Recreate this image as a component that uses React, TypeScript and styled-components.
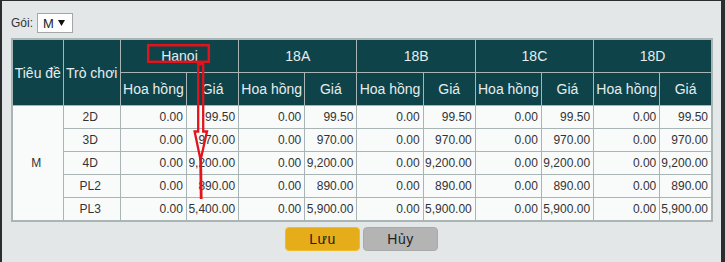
import React from "react";
import styled, { createGlobalStyle } from "styled-components";

const GlobalStyle = createGlobalStyle`
  html, body {
    margin: 0;
    padding: 0;
    background: #2b2d2e;
    font-family: "Liberation Sans", Arial, sans-serif;
  }
`;

const Screen = styled.div`
  position: relative;
  width: 725px;
  height: 262px;
  padding: 1px 4px 0 2px;
  box-sizing: border-box;
  overflow: hidden;
`;

const Panel = styled.div`
  background: #e4e7e8;
  height: 261px;
  padding: 12px 0 0 9px;
  box-sizing: border-box;
`;

const PackRow = styled.div`
  display: flex;
  align-items: center;
  gap: 4px;
  height: 20px;
  font-size: 12px;
  color: #333;
`;

const FakeSelect = styled.div`
  display: flex;
  align-items: center;
  justify-content: space-between;
  width: 36px;
  height: 20px;
  box-sizing: border-box;
  padding: 0 7px 0 5px;
  background: #fff;
  border: 1px solid #a6a6a6;
  font-size: 13px;
  color: #222;
`;

const Grid = styled.table`
  margin-top: 5px;
  border-collapse: collapse;
  table-layout: fixed;
  width: 702px;
  border: 2px solid #a9b5b5;
  font-size: 12px;
`;

const Head = styled.th<{ h?: number }>`
  background: #0f434a;
  color: #e6eded;
  font-weight: normal;
  font-size: 14px;
  border: 1px solid #a9b5b5;
  height: ${(p) => p.h ?? 32}px;
  padding: 0;
  text-align: center;
  white-space: nowrap;
  overflow: hidden;
`;

const Cell = styled.td<{ align?: "center" | "right" }>`
  background: #f9fbfb;
  color: #333;
  border: 1px solid #a9b5b5;
  height: 22px;
  padding: 0 3px 0 0;
  text-align: ${(p) => p.align ?? "right"};
  white-space: nowrap;
  overflow: hidden;
`;

const Actions = styled.div`
  display: flex;
  justify-content: center;
  gap: 3px;
  margin: 5px 9px 0 0;
`;

const Btn = styled.button<{ tone: "gold" | "grey" }>`
  width: 75px;
  height: 24px;
  border-radius: 4px;
  border: 1px solid ${(p) => (p.tone === "gold" ? "#f0bc2c" : "#aaaaaa")};
  background: ${(p) => (p.tone === "gold" ? "#e5ad19" : "#b4b4b4")};
  color: #1e1e1e;
  font-family: "Liberation Sans", Arial, sans-serif;
  font-size: 14px;
  letter-spacing: 0.5px;
  padding: 0;
`;

const Marks = styled.svg`
  position: absolute;
  left: 0;
  top: 0;
  pointer-events: none;
`;

const groups = ["Hanoi", "18A", "18B", "18C", "18D"];
const rows = [
  { game: "2D", hanoi: "99.50", price: "99.50" },
  { game: "3D", hanoi: "970.00", price: "970.00" },
  { game: "4D", hanoi: "9,200.00", price: "9,200.00" },
  { game: "PL2", hanoi: "890.00", price: "890.00" },
  { game: "PL3", hanoi: "5,400.00", price: "5,900.00" },
];

export default function App() {
  return (
    <Screen>
      <GlobalStyle />
      <Panel>
        <PackRow>
          <span>Gói:</span>
          <FakeSelect>
            <span>M</span>
            <svg width="7" height="6" viewBox="0 0 7 6">
              <path d="M0 0 H7 L3.5 6 Z" fill="#111" />
            </svg>
          </FakeSelect>
        </PackRow>
        <Grid>
          <colgroup>
            <col style={{ width: 51 }} />
            <col style={{ width: 57 }} />
            {groups.map((g) => (
              <React.Fragment key={g}>
                <col style={{ width: 66 }} />
                <col style={{ width: 52 }} />
              </React.Fragment>
            ))}
          </colgroup>
          <thead>
            <tr>
              <Head rowSpan={2}>Tiêu đề</Head>
              <Head rowSpan={2}>Trò chơi</Head>
              {groups.map((g) => (
                <Head key={g} colSpan={2}>
                  {g}
                </Head>
              ))}
            </tr>
            <tr>
              {groups.map((g) => (
                <React.Fragment key={g}>
                  <Head h={32}>Hoa hồng</Head>
                  <Head h={32}>Giá</Head>
                </React.Fragment>
              ))}
            </tr>
          </thead>
          <tbody>
            {rows.map((r, i) => (
              <tr key={r.game}>
                {i === 0 && (
                  <Cell align="center" rowSpan={5}>
                    M
                  </Cell>
                )}
                <Cell align="center">{r.game}</Cell>
                {groups.map((g) => (
                  <React.Fragment key={g}>
                    <Cell>0.00</Cell>
                    <Cell>{g === "Hanoi" ? r.hanoi : r.price}</Cell>
                  </React.Fragment>
                ))}
              </tr>
            ))}
          </tbody>
        </Grid>
        <Actions>
          <Btn tone="gold">Lưu</Btn>
          <Btn tone="grey">Hủy</Btn>
        </Actions>
      </Panel>
      <Marks width="725" height="262">
        <rect x="148.2" y="45.2" width="60.6" height="16.6" fill="none" stroke="#e3131b" strokeWidth="2.5" />
        <path
          d="M198.2 64 V131.5 H194.6 L200.6 160 L207 131.5 H203.2 V64 Z"
          fill="none"
          stroke="#e3131b"
          strokeWidth="2.3"
          strokeLinejoin="miter"
        />
        <path d="M200.6 158 L201.2 199" stroke="#e3131b" strokeWidth="2.8" />
      </Marks>
    </Screen>
  );
}
